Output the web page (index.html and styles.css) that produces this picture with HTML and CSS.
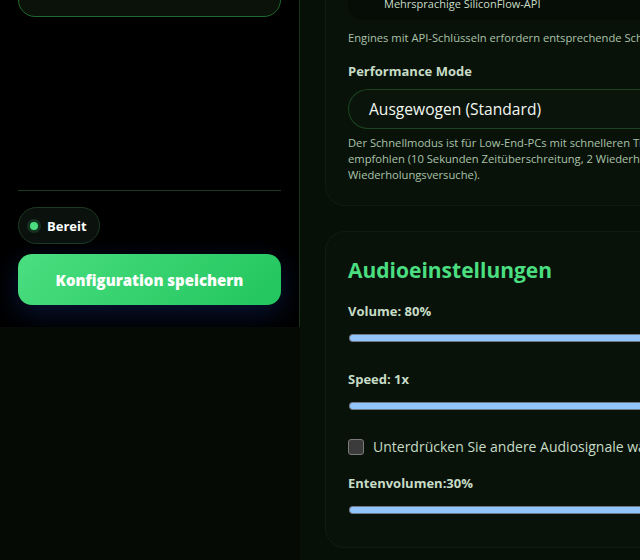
FILE: index.html
```html
<!DOCTYPE html>
<html lang="de">
<head>
    <meta charset="UTF-8">
    <meta name="viewport" content="width=device-width, initial-scale=1.0">
    <title>Einstellungen</title>
    <link rel="stylesheet" href="styles.css">
</head>
<body>
    <div class="layout">
        <aside class="sidebar">
            <button class="nav-btn">Sprachgenerierung</button>
            <div class="sidebar-footer">
                <div class="status-pill"><span class="status-dot"></span>Bereit</div>
                <button class="save-btn">Konfiguration speichern</button>
            </div>
        </aside>

        <main class="main">
            <section class="card card-engine">
                <div class="engine-option">
                    <span class="engine-name">Mehrsprachige SiliconFlow-API</span>
                </div>
                <p class="hint hint-engines">Engines mit API-Schlüsseln erfordern entsprechende Schlüssel in den Einstellungen.</p>

                <label class="field-label">Performance Mode</label>
                <div class="select">Ausgewogen (Standard)</div>
                <p class="hint hint-mode">Der Schnellmodus ist für Low-End-PCs mit schnelleren Timeouts, der ausgewogene Modus wird<br>empfohlen (10 Sekunden Zeitüberschreitung, 2 Wiederholungen, Stabil: 30 Sekunden, 5<br>Wiederholungsversuche).</p>
            </section>

            <section class="card card-audio">
                <h2 class="card-title">Audioeinstellungen</h2>

                <label class="field-label">Volume: 80%</label>
                <div class="slider"></div>

                <label class="field-label">Speed: 1x</label>
                <div class="slider"></div>

                <label class="check-row">
                    <span class="checkbox"></span>
                    Unterdrücken Sie andere Audiosignale während der Wiedergabe
                </label>

                <label class="field-label">Entenvolumen:30%</label>
                <div class="slider"></div>
            </section>
        </main>
    </div>
</body>
</html>
```

FILE: styles.css
```css
body {
    margin: 0;
    background-color: #050a05;
    color: #c6dcc6;
    font-family: 'Open Sans', sans-serif;
    overflow: hidden;
}

.layout {
    display: grid;
    grid-template-columns: 300px 1fr;
    align-items: start;
    height: 560px;
}

.sidebar {
    height: 327px;
    background: #000;
    border-right: 1px solid #17331b;
    padding: 0 18px;
    display: flex;
    flex-direction: column;
    overflow: hidden;
}

.nav-btn {
    margin-top: -30px;
    height: 47px;
    background: #0a120a;
    border: 1px solid #1f6a2a;
    border-radius: 17px;
    color: #fff;
    font-family: inherit;
    font-weight: 700;
    font-size: 15px;
    text-align: left;
    padding: 3px 0 0 40px;
    line-height: 30px;
    align-self: stretch;
    display: flex;
    align-items: flex-start;
}

.sidebar-footer {
    margin-top: auto;
    border-top: 1px solid #1a3a1f;
    padding-top: 16px;
    padding-bottom: 22px;
    display: flex;
    flex-direction: column;
    align-items: flex-start;
    gap: 10px;
}

.status-pill {
    display: flex;
    align-items: center;
    gap: 6px;
    height: 35px;
    padding: 0 12px 0 8px;
    border: 1px solid #1d3a22;
    border-radius: 19px;
    background: #0b120e;
    color: #fff;
    font-weight: 700;
    font-size: 13px;
}

.status-dot {
    width: 8px;
    height: 8px;
    border-radius: 50%;
    background: #4ade80;
    border: 3px solid #163322;
}

.save-btn {
    width: 100%;
    height: 51px;
    border: none;
    border-radius: 14px;
    background: linear-gradient(135deg, #4ade80, #22c55e);
    color: #fff;
    font-family: inherit;
    font-weight: 800;
    font-size: 15px;
    box-shadow: 0 8px 26px rgba(25, 60, 160, 0.35);
}

.main {
    background: #071007;
    height: 560px;
    padding-left: 25px;
    overflow: hidden;
}

.card {
    background: #091209;
    border: 1px solid #0f1c10;
    border-right: none;
    border-radius: 20px 0 0 20px;
    padding: 0 0 0 22px;
}

.card-engine {
    margin-top: -60px;
    padding-top: 22px;
    padding-bottom: 22px;
}

.card-audio {
    margin-top: 25px;
    padding-top: 24px;
    padding-bottom: 33px;
}

.engine-option {
    height: 57px;
    background: #060d06;
    border-radius: 14px 0 0 14px;
    display: flex;
    align-items: flex-end;
    padding: 0 0 12px 36px;
    box-sizing: border-box;
}

.engine-name {
    font-size: 11px;
    color: #c8dcc8;
    line-height: 14px;
    margin-bottom: -3px;
    white-space: nowrap;
}

.hint {
    margin: 10px 0 0;
    font-size: 11.2px;
    line-height: 16px;
    color: #a9c2a9;
    white-space: nowrap;
}

.field-label {
    display: block;
    margin-top: 15px;
    font-size: 13px;
    font-weight: 700;
    color: #c6dcc6;
    line-height: 18px;
}

.hint-engines + .field-label {
    margin-top: 16px;
}

.select {
    margin-top: 9px;
    height: 40px;
    box-sizing: border-box;
    border: 1px solid #1c4421;
    border-right: none;
    border-radius: 20px 0 0 20px;
    background: #0a140a;
    color: #f2f7f2;
    font-size: 15.6px;
    line-height: 38px;
    padding-left: 20px;
    white-space: nowrap;
}

.hint-mode {
    margin-top: 6px;
}

.card-title {
    margin: 0;
    font-size: 21px;
    font-weight: 700;
    color: #4ade80;
    line-height: 28px;
}

.card-title + .field-label {
    margin-top: 18px;
}

.slider {
    margin-top: 14px;
    margin-left: 1px;
    height: 6px;
    background: #93c5fd;
    border: 1px solid #6f7a86;
    border-right: none;
    border-radius: 4px 0 0 4px;
}

.slider + .field-label {
    margin-top: 28px;
}

.check-row {
    display: flex;
    align-items: center;
    gap: 9px;
    margin-top: 27px;
    font-size: 14px;
    color: #c6dcc6;
    white-space: nowrap;
}

.checkbox {
    width: 14px;
    height: 14px;
    border: 1px solid #7a7a7a;
    border-radius: 3px;
    background: #3b3b3b;
    flex-shrink: 0;
}

.check-row + .field-label {
    margin-top: 18px;
}
```
